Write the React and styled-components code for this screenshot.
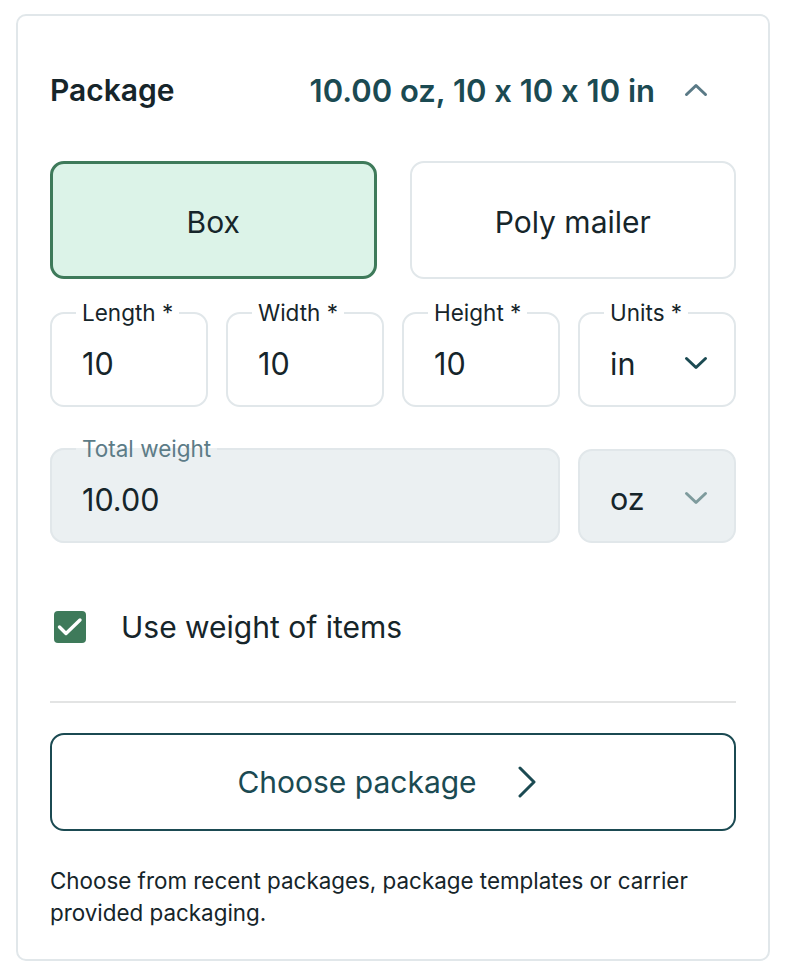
import React from 'react';
import styled, { createGlobalStyle } from 'styled-components';

const GlobalStyle = createGlobalStyle`
  body {
    margin: 0;
    background: #fff;
    font-family: Inter, "Noto Sans", sans-serif;
    font-feature-settings: "calt" 0;
    color: #16252a;
  }
`;

const Card = styled.section`
  box-sizing: border-box;
  width: 754px;
  margin: 14px 0 0 16px;
  padding: 32px 32px 30px 32px;
  border: 2px solid #e1e7ea;
  border-radius: 10px;
`;

const Header = styled.div`
  height: 84px;
  display: flex;
  align-items: center;
`;

const Title = styled.h2`
  margin: 0;
  flex: 1;
  font-size: 30px;
  font-weight: 600;
  color: #16252a;
`;

const Summary = styled.span`
  font-size: 31px;
  font-weight: 600;
  color: #1b4a52;
`;

const IconButton = styled.button`
  display: flex;
  align-items: center;
  justify-content: center;
  width: 40px;
  height: 40px;
  margin: 0 20px 0 21px;
  padding: 0;
  border: none;
  background: none;
  color: ${p => p.$color || '#5a7a86'};
`;

const TypeRow = styled.div`
  display: grid;
  grid-template-columns: 1fr 1fr;
  gap: 33px;
  margin-top: 29px;
`;

const TypeButton = styled.button`
  height: 118px;
  padding-top: 4px;
  border-radius: 14px;
  font-family: inherit;
  font-size: 30px;
  color: #16252a;
  border: ${p => (p.$active ? '3px solid #3e7a5a' : '2px solid #e1e7ea')};
  background: ${p => (p.$active ? '#dcf3e8' : '#fff')};
`;

const DimRow = styled.div`
  display: grid;
  grid-template-columns: repeat(4, 1fr);
  gap: 18px;
  margin-top: 22px;
`;

const WeightRow = styled.div`
  display: grid;
  grid-template-columns: 1fr 158px;
  gap: 18px;
  margin-top: 30px;
`;

const Field = styled.fieldset`
  margin: 0;
  min-width: 0;
  padding: 0 26px 4px 30px;
  border: 2px solid #e1e7ea;
  border-radius: 14px;
  background: ${p => (p.$disabled ? '#ebf0f2' : '#fff')};
`;

const Legend = styled.legend`
  padding: 0 6px;
  margin-left: -6px;
  font-size: 22.5px;
  line-height: 24px;
  color: ${p => (p.$muted ? '#5d7c87' : '#16252a')};
`;

const Value = styled.div`
  display: flex;
  align-items: center;
  justify-content: space-between;
  height: 76px;
  font-size: 30.5px;
  color: #16252a;
`;

const UnitBox = styled.div`
  box-sizing: border-box;
  margin-top: 12px;
  height: 94px;
  padding: 4px 26px 0 30px;
  display: flex;
  align-items: center;
  justify-content: space-between;
  border: 2px solid #e1e7ea;
  border-radius: 14px;
  background: #ebf0f2;
  font-size: 30.5px;
  color: #16252a;
`;

const CheckRow = styled.label`
  display: flex;
  align-items: center;
  gap: 35px;
  height: 48px;
  margin-top: 60px;
  padding-left: 4px;
  font-size: 30px;
  color: #16252a;
`;

const CheckBox = styled.span`
  display: flex;
  align-items: center;
  justify-content: center;
  width: 32px;
  height: 32px;
  border-radius: 4px;
  background: #3e7a5a;
`;

const Divider = styled.hr`
  margin: 50px 0 0;
  border: none;
  height: 2px;
  background: #e3e4e4;
`;

const ChooseButton = styled.button`
  box-sizing: border-box;
  width: 100%;
  height: 98px;
  margin-top: 30px;
  padding: 0 12px 0 0;
  display: flex;
  align-items: center;
  justify-content: center;
  gap: 40px;
  border: 2px solid #1b4a52;
  border-radius: 14px;
  background: #fff;
  font-family: inherit;
  font-size: 30px;
  color: #1b4a52;
`;

const Hint = styled.p`
  margin: 34px 0 0;
  font-size: 22.4px;
  line-height: 32px;
  color: #16252a;
`;

const ChevronDown = ({ color }) => (
  <svg width="24" height="14" viewBox="0 0 24 14" fill="none" stroke={color} strokeWidth="3" strokeLinecap="round" strokeLinejoin="round">
    <path d="M2.5 2.5 L12 11.5 L21.5 2.5" />
  </svg>
);

const ChevronUp = () => (
  <svg width="24" height="14" viewBox="0 0 24 14" fill="none" stroke="currentColor" strokeWidth="3" strokeLinecap="round" strokeLinejoin="round">
    <path d="M2.5 11.5 L12 2.5 L21.5 11.5" />
  </svg>
);

const ChevronRight = () => (
  <svg width="20" height="32" viewBox="0 0 20 32" fill="none" stroke="currentColor" strokeWidth="3" strokeLinecap="round" strokeLinejoin="round">
    <path d="M3 2 L17 16 L3 30" />
  </svg>
);

const Check = () => (
  <svg width="26" height="20" viewBox="0 0 26 20" fill="none" stroke="#fff" strokeWidth="3.4" strokeLinecap="round" strokeLinejoin="round">
    <path d="M2.5 10 L9 16.5 L23 3" />
  </svg>
);

const dims = ['Length', 'Width', 'Height'];

export default function App() {
  return (
    <>
      <GlobalStyle />
      <Card>
        <Header>
          <Title>Package</Title>
          <Summary>10.00 oz, 10 x 10 x 10 in</Summary>
          <IconButton aria-label="Collapse">
            <ChevronUp />
          </IconButton>
        </Header>

        <TypeRow>
          <TypeButton $active>Box</TypeButton>
          <TypeButton>Poly mailer</TypeButton>
        </TypeRow>

        <DimRow>
          {dims.map(d => (
            <Field key={d}>
              <Legend>{d} *</Legend>
              <Value>10</Value>
            </Field>
          ))}
          <Field>
            <Legend>Units *</Legend>
            <Value>
              in
              <ChevronDown color="#1b4a52" />
            </Value>
          </Field>
        </DimRow>

        <WeightRow>
          <Field $disabled>
            <Legend $muted>Total weight</Legend>
            <Value>10.00</Value>
          </Field>
          <UnitBox>
            oz
            <ChevronDown color="#7e9b9d" />
          </UnitBox>
        </WeightRow>

        <CheckRow>
          <CheckBox>
            <Check />
          </CheckBox>
          Use weight of items
        </CheckRow>

        <Divider />

        <ChooseButton>
          Choose package
          <ChevronRight />
        </ChooseButton>

        <Hint>
          Choose from recent packages, package templates or carrier provided packaging.
        </Hint>
      </Card>
    </>
  );
}
